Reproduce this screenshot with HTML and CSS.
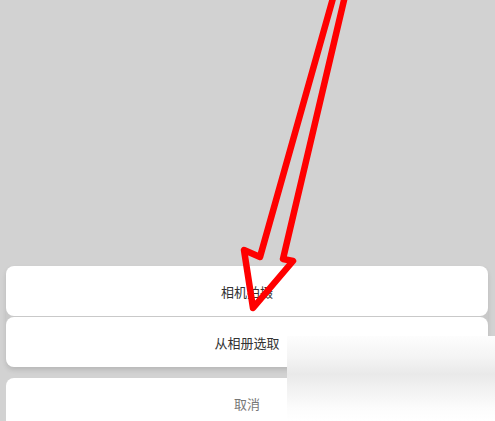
FILE: index.html
```html
<!DOCTYPE html>
<html lang="zh">
<head>
<meta charset="utf-8">
<link rel="stylesheet" href="styles.css">
</head>
<body>
<div class="screen">
  <div class="sheet">
    <div class="group">
      <div class="btn">相机拍摄</div>
      <div class="btn">从相册选取</div>
    </div>
    <div class="btn cancel">取消</div>
  </div>
  <svg class="arrow" width="495" height="421" viewBox="0 0 495 421">
    <polyline points="335.3,-10 260,257 244,250 253,308 293,261 283,259 346.4,-10" fill="none" stroke="#ff0000" stroke-width="6.5" stroke-linejoin="round" stroke-linecap="round"/>
  </svg>
  <div class="mark"></div>
</div>
</body>
</html>
```
FILE: styles.css
```css
html, body {
  margin: 0;
  padding: 0;
}
body {
  background: #d2d2d2;
  font-family: "Noto Sans CJK SC", "Noto Sans", sans-serif;
}
.screen {
  position: relative;
  width: 495px;
  height: 421px;
  overflow: hidden;
  background: #d2d2d2;
}
.sheet {
  display: flex;
  flex-direction: column;
  gap: 11px;
  padding: 266px 7px 0 6px;
}
.group {
  display: flex;
  flex-direction: column;
  gap: 1px;
  background: #c9c9c9;
  border-radius: 8px;
  box-shadow: 0 3px 5px rgba(0, 0, 0, 0.12);
}
.btn {
  height: 50px;
  background: #ffffff;
  border-radius: 8px;
  display: flex;
  align-items: center;
  justify-content: center;
  font-size: 13px;
  color: #333333;
}
.cancel {
  color: #777777;
}
.arrow {
  position: absolute;
  left: 0;
  top: 0;
}
.mark {
  position: absolute;
  left: 287px;
  top: 336px;
  width: 208px;
  height: 85px;
  background: linear-gradient(180deg, #fdfdfd 0%, #f4f4f4 25%, #e9e9e9 45%, #f3f3f3 65%, #fcfcfc 85%, #ffffff 100%);
}
```
